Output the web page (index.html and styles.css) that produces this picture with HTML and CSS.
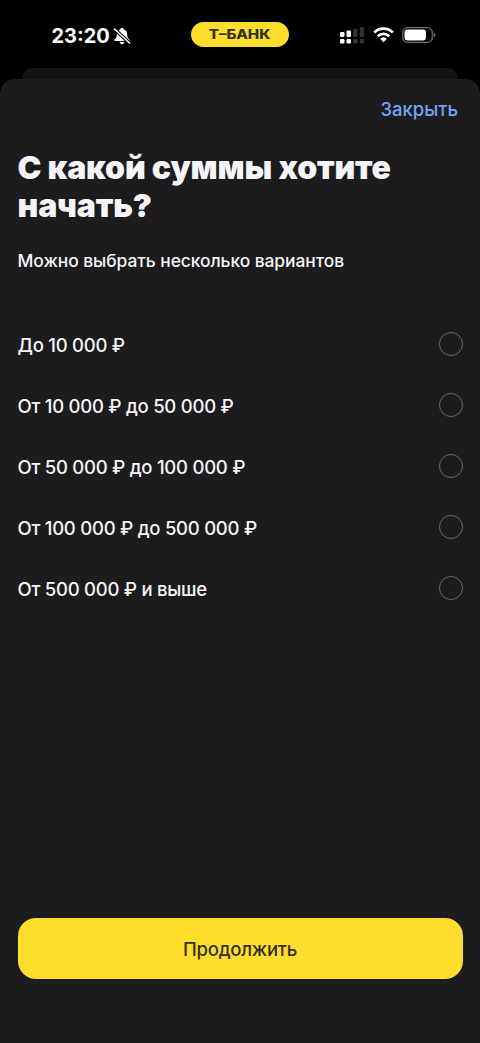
FILE: index.html
```html
<!DOCTYPE html>
<html lang="ru">
<head>
<meta charset="utf-8">
<title>Т-Банк</title>
<link rel="stylesheet" href="styles.css">
</head>
<body>
<div class="status">
  <div class="status-left">
    <span class="time">23:20</span>
    <svg class="bell" viewBox="0 0 18 18" width="18" height="18">
      <path fill="#fff" d="M9 1C7.900 1 7.200 1.700 7.100 2.500C4.800 3.200 3.900 5 3.900 7C3.900 10 3 11.200 1.600 12.500C.9 13.300 1.200 14 2 14H16C16.800 14 17.100 13.300 16.400 12.500C15 11.200 14.100 10 14.100 7C14.100 5 13.200 3.200 10.900 2.500C10.800 1.700 10.100 1 9 1ZM6.600 15H11.400C11.200 16.400 10.300 17.200 9 17.200S6.800 16.400 6.600 15Z"/>
      <path stroke="#000" stroke-width="3.400" d="M1 1.500L17 16.500"/>
      <path stroke="#fff" stroke-width="1.500" stroke-linecap="round" d="M1.500 2L16.500 16"/>
    </svg>
  </div>
  <div class="brand"><span>Т–БАНК</span></div>
  <div class="status-right">
    <svg width="25" height="17" viewBox="0 0 25 17">
      <g fill="#fff"><rect y="5" width="4.500" height="5" rx="1.200"/><rect x="6.500" y="3.500" width="4.500" height="6.500" rx="1.200"/><rect y="12" width="4.500" height="4.500" rx="1.300"/><rect x="6.500" y="12" width="4.500" height="4.500" rx="1.300"/></g>
      <g fill="#333335"><rect x="13.200" y="2" width="4.300" height="8" rx="1.200"/><rect x="19.800" y="0" width="4.300" height="10" rx="1.200"/><rect x="13.200" y="12" width="4.300" height="4.500" rx="1.300"/><rect x="19.800" y="12" width="4.300" height="4.500" rx="1.300"/></g>
    </svg>
    <svg class="wifi" width="21" height="16" viewBox="0 0 21 16">
      <g fill="none" stroke="#fff" stroke-width="2.700"><path d="M1.200 5.500A13.200 13.200 0 0 1 19.800 5.500"/><path d="M4.700 9.200A8.300 8.300 0 0 1 16.300 9.200"/></g>
      <path fill="#fff" d="M7.100 11.700Q10.500 9 13.900 11.700L10.500 15.200Z"/>
    </svg>
    <svg class="battery" width="34" height="16" viewBox="0 0 34 16">
      <rect x=".7" y=".7" width="29.600" height="14.600" rx="4.800" fill="none" stroke="#6e6e70" stroke-width="1.200"/>
      <rect x="2.500" y="2.500" width="21.500" height="11" rx="3" fill="#fff"/>
      <path d="M31.700 5.500Q33.600 6.300 33.600 8T31.700 10.500Z" fill="#6e6e70"/>
    </svg>
  </div>
</div>
<div class="behind"></div>
<main class="sheet">
  <div class="top"><span class="close">Закрыть</span></div>
  <h1 class="title">С какой суммы хотите<br>начать?</h1>
  <p class="hint">Можно выбрать несколько вариантов</p>
  <div class="options">
    <div class="option"><span>До 10 000 ₽</span><i class="radio"></i></div>
    <div class="option"><span>От 10 000 ₽ до 50 000 ₽</span><i class="radio"></i></div>
    <div class="option"><span>От 50 000 ₽ до 100 000 ₽</span><i class="radio"></i></div>
    <div class="option"><span>От 100 000 ₽ до 500 000 ₽</span><i class="radio"></i></div>
    <div class="option"><span>От 500 000 ₽ и выше</span><i class="radio"></i></div>
  </div>
  <button class="next">Продолжить</button>
</main>
</body>
</html>
```
FILE: styles.css
```css
* { box-sizing: border-box; }
body {
  margin: 0;
  height: 1043px;
  overflow: hidden;
  display: flex;
  flex-direction: column;
  background: #000;
  color: #f5f5f7;
  font-family: Inter, "Liberation Sans", sans-serif;
}
.status {
  height: 68px;
  flex: none;
  display: grid;
  grid-template-columns: 191px 98px 191px;
  padding-top: 22px;
}
.status-left, .status-right { display: flex; align-items: center; height: 26px; }
.status-left { padding: 1px 0 0 51.5px; }
.time { font-size: 20px; font-weight: 700; line-height: 26px; color: #fff; }
.bell { margin-left: 3.5px; }
.status-right { padding-left: 51px; }
.wifi { margin-left: 8px; }
.battery { margin-left: 8px; }
.brand {
  height: 25px;
  border-radius: 13px;
  background: #fddd2d;
  color: #33301c;
  display: flex;
  align-items: center;
  justify-content: center;
  font-size: 12.500px;
  font-weight: 800;
}
.brand span { transform: scaleX(1.21); }
.behind { height: 11px; flex: none; margin: 0 22px; border-radius: 11px 11px 0 0; background: #141415; box-shadow: 0 11px #141415; }
.sheet {
  flex: 1;
  display: flex;
  flex-direction: column;
  background: #1c1c1e;
  border-radius: 15px 15px 0 0;
  padding: 0 17.5px 64px;
  position: relative;
}
.top { display: flex; justify-content: flex-end; padding: 18px 4.500px 0 0; height: 70px; }
.close { color: #6ea5f7; font-size: 18.5px; line-height: 24px; font-weight: 500; }
.title { margin: 0; font-size: 32px; line-height: 38px; font-weight: 900; letter-spacing: -.14px; white-space: nowrap; }
.hint { margin: 24px 0 0; font-size: 17.400px; line-height: 24px; font-weight: 500; letter-spacing: -.05px; white-space: nowrap; }
.options { margin-top: 40.500px; }
.option { height: 61px; display: flex; align-items: center; justify-content: space-between; font-size: 18.500px; font-weight: 500; letter-spacing: -.25px; white-space: nowrap; }
.option span { padding-top: 1px; }
.radio { width: 24px; height: 24px; border: 1px solid #69696b; border-radius: 50%; }
.next {
  margin: auto 0 0;
  height: 61px;
  width: 100%;
  flex: none;
  border: 0;
  border-radius: 18px;
  background: #ffdd2d;
  color: #33301c;
  font: 500 18.5px Inter, sans-serif;
  letter-spacing: -.25px;
}
```
